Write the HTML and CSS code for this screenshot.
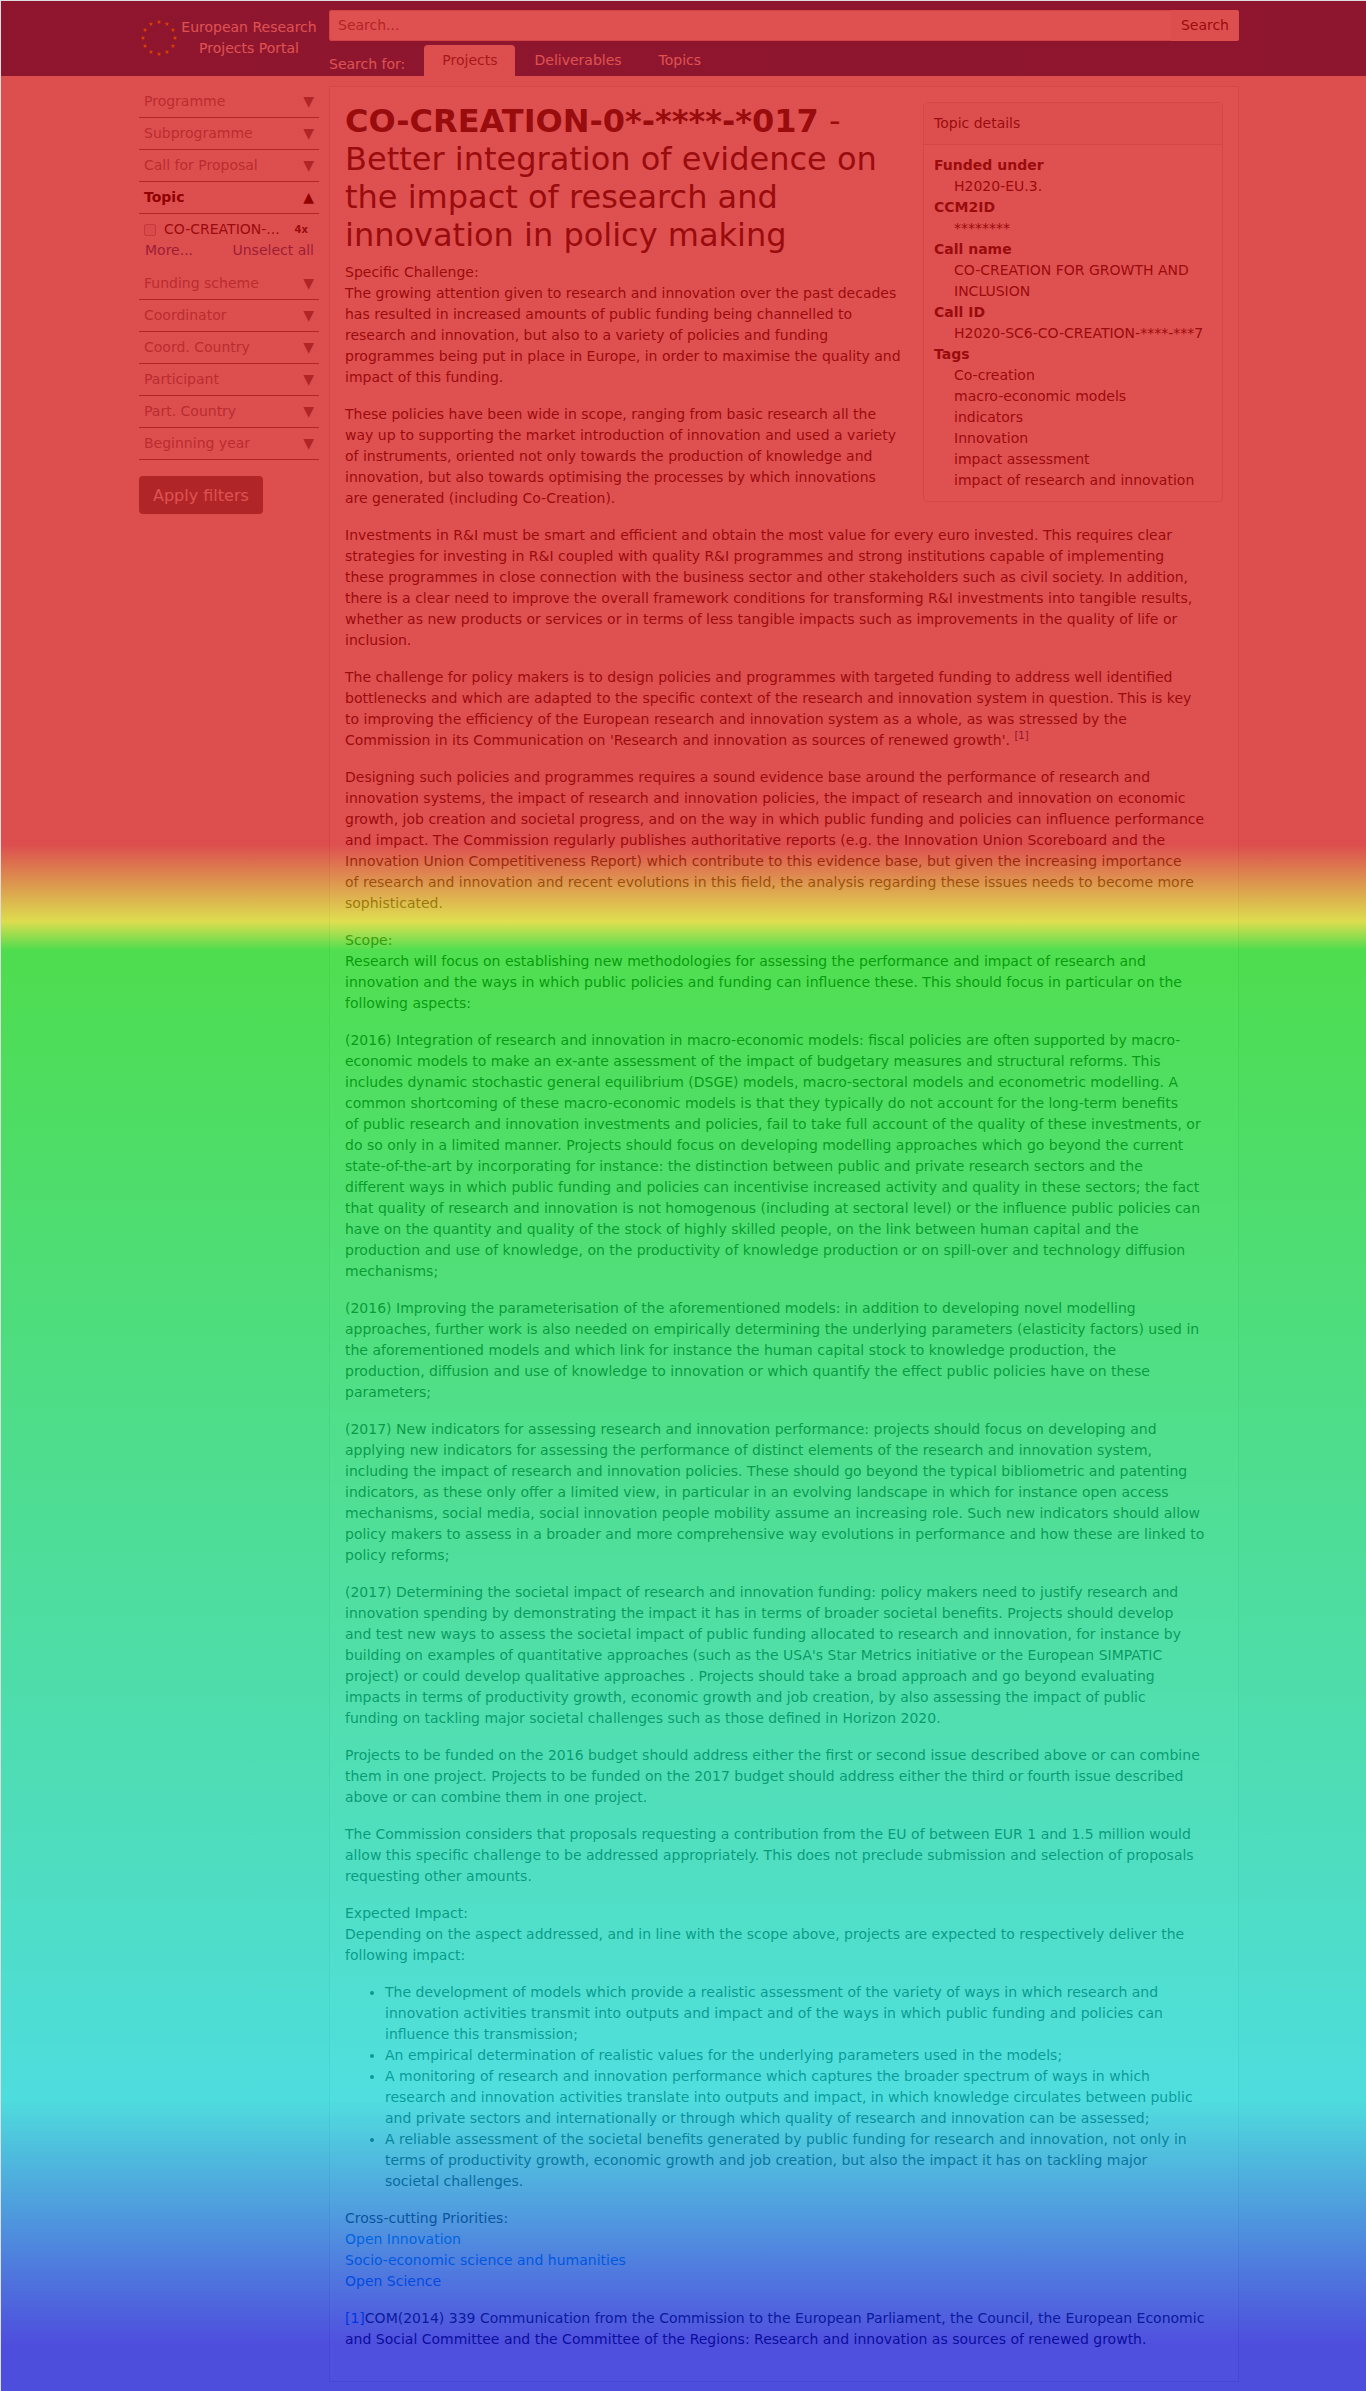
FILE: index.html
```html
<!DOCTYPE html>
<html lang="en">
<head>
<meta charset="utf-8">
<meta name="viewport" content="width=device-width, initial-scale=1">
<title>European Research Projects Portal</title>
<link rel="stylesheet" href="styles.css">
</head>
<body>
<header class="topbar">
  <div class="container columns">
    <a class="brand" href="#">
      <svg class="brand-logo" viewBox="-19 -19 38 38" aria-hidden="true">
        <defs><path id="star" d="M0-2.3 .6-.7 2.3-.7 .9.3 1.4 2 0 1-1.4 2-.9.3-2.3-.7-.6-.7Z"/></defs>
        <g fill="#ffcc00">
          <use href="#star" x="0" y="-16"/><use href="#star" x="8" y="-14"/><use href="#star" x="14" y="-8"/>
          <use href="#star" x="16" y="0"/><use href="#star" x="14" y="8"/><use href="#star" x="8" y="14"/>
          <use href="#star" x="0" y="16"/><use href="#star" x="-8" y="14"/><use href="#star" x="-14" y="8"/>
          <use href="#star" x="-16" y="0"/><use href="#star" x="-14" y="-8"/><use href="#star" x="-8" y="-14"/>
        </g>
      </svg>
      <span class="brand-name">European Research Projects Portal</span>
    </a>
    <div class="search">
      <form class="search-form">
        <input class="search-input" type="search" placeholder="Search..." aria-label="Search">
        <button class="search-button" type="submit">Search</button>
      </form>
      <nav class="tabs">
        <span class="tabs-label">Search for:</span>
        <a class="tab tab-active" href="#">Projects</a>
        <a class="tab" href="#">Deliverables</a>
        <a class="tab" href="#">Topics</a>
      </nav>
    </div>
  </div>
</header>

<div class="container columns page">
  <form class="filters">
    <button class="filter" type="button">Programme<span class="arrow">▼</span></button>
    <button class="filter" type="button">Subprogramme<span class="arrow">▼</span></button>
    <button class="filter" type="button">Call for Proposal<span class="arrow">▼</span></button>
    <button class="filter filter-open" type="button">Topic<span class="arrow">▲</span></button>
    <div class="filter-panel">
      <label class="option"><input class="option-box" type="checkbox"><span>CO-CREATION-...</span><b class="option-count">4x</b></label>
      <div class="filter-links"><a href="#">More...</a><a href="#">Unselect all</a></div>
    </div>
    <button class="filter" type="button">Funding scheme<span class="arrow">▼</span></button>
    <button class="filter" type="button">Coordinator<span class="arrow">▼</span></button>
    <button class="filter" type="button">Coord. Country<span class="arrow">▼</span></button>
    <button class="filter" type="button">Participant<span class="arrow">▼</span></button>
    <button class="filter" type="button">Part. Country<span class="arrow">▼</span></button>
    <button class="filter" type="button">Beginning year<span class="arrow">▼</span></button>
    <button class="apply" type="submit">Apply filters</button>
  </form>

  <main class="article">
    <aside class="card">
      <div class="card-header">Topic details</div>
      <dl class="card-body">
        <dt>Funded under</dt><dd>H2020-EU.3.</dd>
        <dt>CCM2ID</dt><dd>********</dd>
        <dt>Call name</dt><dd>CO-CREATION FOR GROWTH AND INCLUSION</dd>
        <dt>Call ID</dt><dd>H2020-SC6-CO-CREATION-****-***7</dd>
        <dt>Tags</dt><dd>Co-creation</dd><dd>macro-economic models</dd><dd>indicators</dd><dd>Innovation</dd><dd>impact assessment</dd><dd>impact of research and innovation</dd>
      </dl>
    </aside>
    <h1 class="title"><b>CO-CREATION-0*-****-*017</b> - Better integration of evidence on the impact of research and innovation in policy making</h1>
    <div>Specific Challenge:</div>
    <p>The growing attention given to research and innovation over the past decades has resulted in increased amounts of public funding being channelled to research and innovation, but also to a variety of policies and funding programmes being put in place in Europe, in order to maximise the quality and impact of this funding.</p>
    <p>These policies have been wide in scope, ranging from basic research all the way up to supporting the market introduction of innovation and used a variety of instruments, oriented not only towards the production of knowledge and innovation, but also towards optimising the processes by which innovations are&nbsp;generated (including Co-Creation).</p>
    <p>Investments in R&amp;I must be smart and efficient and obtain the most value for every euro invested. This requires clear strategies for investing in R&amp;I coupled with quality R&amp;I programmes and strong institutions capable of implementing these programmes in close connection with the business sector and other stakeholders such as civil society. In addition, there is a clear need to improve the overall framework conditions for transforming R&amp;I investments into tangible results, whether as new products or services or in terms of less tangible impacts such as improvements in the quality of life or inclusion.</p>
    <p>The challenge for policy makers is to design policies and programmes with targeted funding to address well identified bottlenecks and which are adapted to the specific context of the research and innovation system in question. This is key to improving the efficiency of the European research and innovation system as a whole, as was stressed by the Commission in its Communication on 'Research and innovation as sources of renewed growth'. <a href="#note"><sup>[1]</sup></a></p>
    <p>Designing such policies and programmes requires a sound evidence base around the performance of research and innovation systems, the impact of research and innovation policies, the impact of research and innovation on economic growth, job creation and societal progress, and on the way in which public funding and policies can influence performance and impact. The Commission regularly publishes authoritative reports (e.g. the Innovation Union Scoreboard and the Innovation Union Competitiveness Report) which contribute to this evidence base, but given the increasing importance of&nbsp;research and innovation and recent evolutions in this field, the analysis regarding these issues needs to become more sophisticated.</p>
    <div>Scope:</div>
    <p>Research will focus on establishing new methodologies for assessing the performance and impact of research and innovation and the ways in which public policies and funding can influence these. This should focus in particular on the following aspects:</p>
    <p>(2016) Integration of research and innovation in macro-economic models: fiscal policies are often supported by macro-economic models to make an ex-ante assessment of the impact of budgetary measures and structural reforms. This includes dynamic stochastic general equilibrium (DSGE) models, macro-sectoral models and econometric modelling. A common shortcoming of these macro-economic models is that they typically do not account for the long-term benefits of&nbsp;public research and innovation investments and policies, fail to take full account of the quality of these investments, or do&nbsp;so only in a limited manner. Projects should focus on developing modelling approaches which go beyond the current state-of-the-art by incorporating for instance: the distinction between public and private research sectors and the different&nbsp;ways in which public funding and policies can incentivise increased activity and quality in these sectors; the fact that quality of research and innovation is not homogenous (including at sectoral level) or the influence public policies can have on the quantity and quality of the stock of highly skilled people, on the link between human capital and the production and use of knowledge, on the productivity of knowledge production or on spill-over and technology diffusion mechanisms;</p>
    <p>(2016) Improving the parameterisation of the aforementioned models: in addition to developing novel modelling approaches, further work is also needed on empirically determining the underlying parameters (elasticity factors) used in the aforementioned models and which link for instance the human capital stock to knowledge production, the production,&nbsp;diffusion and use of knowledge to innovation or which quantify the effect public policies have on these parameters;</p>
    <p>(2017) New indicators for assessing research and innovation performance: projects should focus on developing and applying new indicators for assessing the performance of distinct elements of the research and innovation system, including the impact of research and innovation policies. These should go beyond the typical bibliometric and patenting indicators, as these only offer a limited view, in particular in an evolving landscape in which for instance open access mechanisms, social media, social innovation people mobility assume an increasing role. Such new indicators should allow policy makers to assess in a broader and more comprehensive way evolutions in performance and how these are linked to policy reforms;</p>
    <p>(2017) Determining the societal impact of research and innovation funding: policy makers need to justify research and innovation spending by demonstrating the impact it has in terms of broader societal benefits. Projects should develop and&nbsp;test new ways to assess the societal impact of public funding allocated to research and innovation, for instance by building on examples of quantitative approaches (such as the USA's Star Metrics initiative or the European SIMPATIC project) or could develop qualitative approaches . Projects should take a broad approach and go beyond evaluating impacts in terms of productivity growth, economic growth and job creation, by also assessing the impact of public funding&nbsp;on tackling major societal challenges such as those defined in Horizon 2020.</p>
    <p>Projects to be funded on the 2016 budget should address either the first or second issue described above or can combine them in one project. Projects to be funded on the 2017 budget should address either the third or fourth issue described above or can combine them in one project.</p>
    <p>The Commission considers that proposals requesting a contribution from the EU of between EUR 1 and 1.5 million would allow this specific challenge to be addressed appropriately. This does not preclude submission and selection of proposals requesting other amounts.</p>
    <div>Expected Impact:</div>
    <p>Depending on the aspect addressed, and in line with the scope above, projects are expected to respectively deliver the following impact:</p>
    <ul class="impacts">
      <li>The development of models which provide a realistic assessment of the variety of ways in which research and innovation activities transmit into outputs and impact and of the ways in which public funding and policies can influence this transmission;</li>
      <li>An empirical determination of realistic values for the underlying parameters used in the models;</li>
      <li>A monitoring of research and innovation performance which captures the broader spectrum of ways in which research and innovation activities translate into outputs and impact, in which knowledge circulates between public and private sectors and internationally or through which quality of research and innovation can be assessed;</li>
      <li>A reliable assessment of the societal benefits generated by public funding for research and innovation, not only in terms of productivity growth, economic growth and job creation, but also the impact it has on tackling major societal challenges.</li>
    </ul>
    <div>Cross-cutting Priorities:</div>
    <p><a class="priority" href="#">Open Innovation</a><br><a class="priority" href="#">Socio-economic science and humanities</a><br><a class="priority" href="#">Open Science</a></p>
    <p id="note"><a class="priority" href="#">[1]</a>COM(2014) 339 Communication from the Commission to the European Parliament, the Council, the European Economic and Social Committee and the Committee of the Regions: Research and innovation as sources of renewed growth.</p>
  </main>
</div>
</body>
</html>
```
FILE: styles.css
```css
*, *::before, *::after { box-sizing: border-box; }

body {
  position: relative;
  margin: 0;
  background: #f8f9fa;
  color: #212529;
  font: 14px/21px "DejaVu Sans", sans-serif;
}

/* scroll-depth heat map laid over the whole page */
body::after {
  content: "";
  position: absolute;
  inset: 0;
  z-index: 10;
  pointer-events: none;
  border: solid #ddd;
  border-width: 1px 0 0 1px;
  background: linear-gradient(
    rgba(208, 0, 0, .686) 35.3%,
    rgba(208, 208, 0, .686) 38.5%,
    rgba(0, 208, 0, .686) 39.7%,
    rgba(0, 208, 208, .686) 87.7%,
    rgba(0, 0, 208, .686) 98%);
}

a { color: #004494; text-decoration: none; }
button, input { font: inherit; color: #212529; }
p { margin: 0 0 16px; }

.container { max-width: 1112px; margin: 0 auto; padding-left: 12px; }
.columns { display: grid; grid-template-columns: 180px minmax(0, 1fr); column-gap: 10px; }

/* header */
.topbar { background: #004494; color: #fff; }
.brand { display: flex; align-items: center; align-self: center; color: #fff; }
.brand-logo { flex: none; width: 40px; height: 38px; }
.brand-name { flex: 1; text-align: center; }
.search { padding-top: 10px; }
.search-form { display: flex; height: 31px; border-radius: 3px; overflow: hidden; background: #fff; }
.search-input {
  flex: 1; min-width: 0; padding: 0 8px; appearance: none;
  border: 1px solid #ced4da; border-right: 0; border-radius: 3px 0 0 3px; background: #fff;
}
.search-input::placeholder { color: #6c757d; opacity: 1; }
.search-button { padding: 0 10px; border: 0; background: #f8f9fa; }
.tabs { display: flex; gap: 1px; margin-top: 4px; }
.tabs-label { margin: 9px 18px 0 0; }
.tab { height: 31px; padding: 5px 18px; border-radius: 4px 4px 0 0; color: #fff; }
.tab-active { background: #f8f9fa; color: #495057; }

/* filters */
.page { padding-top: 10px; padding-bottom: 10px; align-items: start; }
.filters { display: flex; flex-direction: column; align-items: stretch; }
.filter {
  display: flex; justify-content: space-between; height: 32px; padding: 5px;
  border: 0; border-bottom: 1px solid #6c757d; background: none; color: #868e96;
}
.arrow { color: #6c757d; }
.filter-open, .filter-open .arrow { color: #000; font-weight: bold; }
.filter-panel { padding: 5px 5px 7px 5px; }
.option { display: flex; align-items: center; gap: 8px; }
.option-box {
  appearance: none; width: 12px; height: 12px; margin: 0;
  border: 1px solid #adb5bd; border-radius: 2px; background: #e9ecef;
}
.option-count { margin-left: auto; padding-right: 6px; font-size: 10px; }
.filter-links { display: flex; justify-content: space-between; padding-left: 1px; }
.filter-links a { color: #2a5fa8; }
.apply {
  align-self: flex-start; height: 38px; margin-top: 16px; padding: 0 14px;
  border: 0; border-radius: 4px; background: #6c757d; color: #fff; font-size: 16px;
}

/* article: the text column is a little narrower than the card's edge */
.article { padding: 15px 31px 15px 15px; border: 1px solid #dee2e6; background: #fff; }
.title { margin: 0 0 8px; font-size: 32px; line-height: 38px; font-weight: normal; }
sup { font-size: 10px; line-height: 0; vertical-align: super; }
.card { float: right; width: 300px; margin: 0 -16px 0 17px; border: 1px solid #dfdfdf; border-radius: 4px; }
.card-header { padding: 10px; border-bottom: 1px solid #dfdfdf; background: #f8f9fa; }
.card-body { margin: 0; padding: 10px; }
.card-body dt { font-weight: bold; }
.card-body dd { margin: 0 0 0 20px; }
.impacts { margin: 0 0 16px; padding: 0 5px 0 40px; }
.priority { color: #007bff; }
```
